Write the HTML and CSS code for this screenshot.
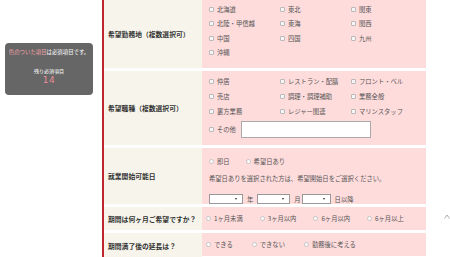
FILE: index.html
```html
<!DOCTYPE html>
<html lang="ja">
<head>
<meta charset="utf-8">
<link rel="stylesheet" href="styles.css">
</head>
<body>
<div class="page">
  <aside class="side">
    <div class="notice">
      <p class="notice-msg"><span class="req">色のついた項目</span>は必須項目です。</p>
      <p class="notice-remain">残り必須項目</p>
      <p class="notice-count">14</p>
    </div>
  </aside>
  <div class="form">
    <div class="row r1">
      <div class="label">希望勤務地（複数選択可）</div>
      <div class="value">
        <div class="checks">
          <label class="opt"><span class="cb"></span>北海道</label>
          <label class="opt"><span class="cb"></span>東北</label>
          <label class="opt"><span class="cb"></span>関東</label>
          <label class="opt"><span class="cb"></span>北陸・甲信越</label>
          <label class="opt"><span class="cb"></span>東海</label>
          <label class="opt"><span class="cb"></span>関西</label>
          <label class="opt"><span class="cb"></span>中国</label>
          <label class="opt"><span class="cb"></span>四国</label>
          <label class="opt"><span class="cb"></span>九州</label>
          <label class="opt"><span class="cb"></span>沖縄</label>
        </div>
      </div>
    </div>
    <div class="row r2">
      <div class="label">希望職種（複数選択可）</div>
      <div class="value">
        <div class="checks checks2">
          <label class="opt"><span class="cb"></span>仲居</label>
          <label class="opt"><span class="cb"></span>レストラン・配膳</label>
          <label class="opt"><span class="cb"></span>フロント・ベル</label>
          <label class="opt"><span class="cb"></span>売店</label>
          <label class="opt"><span class="cb"></span>調理・調理補助</label>
          <label class="opt"><span class="cb"></span>業務全般</label>
          <label class="opt"><span class="cb"></span>裏方業務</label>
          <label class="opt"><span class="cb"></span>レジャー関連</label>
          <label class="opt"><span class="cb"></span>マリンスタッフ</label>
        </div>
        <div class="other">
          <label class="opt"><span class="cb"></span>その他</label>
          <span class="textbox"></span>
        </div>
      </div>
    </div>
    <div class="row r3">
      <div class="label">就業開始可能日</div>
      <div class="value">
        <div class="radios">
          <label class="opt"><span class="rd"></span>即日</label>
          <label class="opt"><span class="rd"></span>希望日あり</label>
        </div>
        <p class="note">希望日ありを選択された方は、希望開始日をご選択ください。</p>
        <div class="dates">
          <span class="select s1"><span class="arrow"></span></span><span class="unit u1">年</span>
          <span class="select s2"><span class="arrow"></span></span><span class="unit u2">月</span>
          <span class="select s3"><span class="arrow"></span></span><span class="unit">日以降</span>
        </div>
      </div>
    </div>
    <div class="row r4">
      <div class="label">期間は何ヶ月ご希望ですか？</div>
      <div class="value">
        <div class="radios inline">
          <label class="opt"><span class="rd"></span>1ヶ月未満</label>
          <label class="opt"><span class="rd"></span>3ヶ月以内</label>
          <label class="opt"><span class="rd"></span>6ヶ月以内</label>
          <label class="opt"><span class="rd"></span>6ヶ月以上</label>
        </div>
      </div>
    </div>
    <div class="row r5">
      <div class="label">期間満了後の延長は？</div>
      <div class="value">
        <div class="radios inline wide">
          <label class="opt"><span class="rd"></span>できる</label>
          <label class="opt"><span class="rd"></span>できない</label>
          <label class="opt"><span class="rd"></span>勤務後に考える</label>
        </div>
      </div>
    </div>
  </div>
</div>
<div class="pagetop"><svg width="6" height="5" viewBox="0 0 6 5"><polyline points="0.5,4.5 3,1 5.5,4.5" fill="none" stroke="#999" stroke-width="0.8"/></svg></div>
</body>
</html>
```

FILE: styles.css
```css
html, body {
  margin: 0;
  padding: 0;
  background: #fff;
  height: 257px;
  overflow: hidden;
}
body {
  font-family: "Noto Sans CJK JP", "Noto Sans", sans-serif;
  color: #555;
  position: relative;
}
p { margin: 0; }

.page {
  display: flex;
  align-items: flex-start;
}

.side {
  flex: none;
  width: 102px;
  box-sizing: border-box;
  padding: 43px 0 0 5px;
}
.notice {
  width: 88px;
  height: 52px;
  background: #666;
  border-radius: 4px;
  color: #fff;
  text-align: center;
  box-sizing: border-box;
  padding-top: 6px;
}
.notice-msg {
  font-size: 5.4px;
  line-height: 6px;
}
.req { color: #f5a3a8; }
.notice-remain {
  margin-top: 13px;
  font-size: 5px;
  line-height: 6px;
}
.notice-count {
  margin-top: 1px;
  font-family: "DejaVu Sans", sans-serif;
  font-size: 9px;
  line-height: 11px;
  color: #e98e96;
  letter-spacing: 0.5px;
}

.form {
  width: 322px;
  flex: none;
  border-left: 2px solid #c2262d;
  display: flex;
  flex-direction: column;
  gap: 3px;
}
.row {
  display: grid;
  grid-template-columns: 98px 1fr;
}
.label {
  background: #f7f5eb;
  display: flex;
  align-items: center;
  padding-left: 4px;
  font-size: 6.8px;
  font-weight: bold;
  color: #333;
}
.value {
  background: #ffdcdc;
  padding-left: 7px;
  font-size: 6.3px;
}

.opt {
  display: flex;
  align-items: center;
  white-space: nowrap;
}
.cb {
  width: 5px;
  height: 5px;
  box-sizing: border-box;
  border: 1px solid #b9b9b9;
  background: #f6f6f6;
  border-radius: 1px;
  margin-right: 3px;
  flex: none;
}
.rd {
  width: 5px;
  height: 5px;
  box-sizing: border-box;
  border: 1px solid #c4c4c4;
  background: #fff;
  border-radius: 50%;
  margin-right: 3px;
  flex: none;
}

/* row 1 */
.r1 .value {
  padding-top: 2px;
  padding-bottom: 8px;
}
.checks {
  display: grid;
  grid-template-columns: 71px 71px 71px;
  grid-auto-rows: 14.5px;
}

/* row 2 */
.r2 .value {
  padding-top: 3px;
  padding-bottom: 7px;
}
.checks2 {
  grid-auto-rows: 15px;
}
.other {
  display: flex;
  align-items: center;
  margin-top: 2px;
  height: 17px;
}
.textbox {
  width: 130px;
  height: 17px;
  box-sizing: border-box;
  border: 1px solid #aaa;
  background: #fff;
  margin-left: 5px;
}

/* row 3 */
.r3 .value {
  padding-top: 7px;
  padding-bottom: 0;
}
.radios {
  display: flex;
  height: 12px;
  gap: 17px;
}
.r3 .radios { gap: 16px; }
.note {
  margin-top: 6px;
  line-height: 12px;
  height: 12px;
}
.dates {
  display: flex;
  align-items: center;
  margin-top: 9px;
  height: 10px;
}
.select {
  height: 10px;
  box-sizing: border-box;
  border: 1px solid #999;
  background: #fff;
  display: flex;
  align-items: center;
  justify-content: flex-end;
  padding-right: 5px;
}
.s1 { width: 34px; }
.s2 { width: 33px; }
.s3 { width: 29px; }
.arrow {
  width: 0;
  height: 0;
  border-left: 1.5px solid transparent;
  border-right: 1.5px solid transparent;
  border-top: 2px solid #333;
}
.unit {
  margin: 0 0 0 4px;
}
.u1 { margin-right: 4px; }
.u2 { margin-right: 1px; }

/* rows 4, 5 */
.r4 .value, .r5 .value {
  height: 23px;
  display: flex;
  align-items: center;
  padding-left: 4px;
}
.inline { height: auto; align-items: center; }
.wide { gap: 19px; }
.r5 { min-height: 26px; }

.pagetop {
  position: absolute;
  left: 444px;
  top: 212px;
  line-height: 0;
}
```
